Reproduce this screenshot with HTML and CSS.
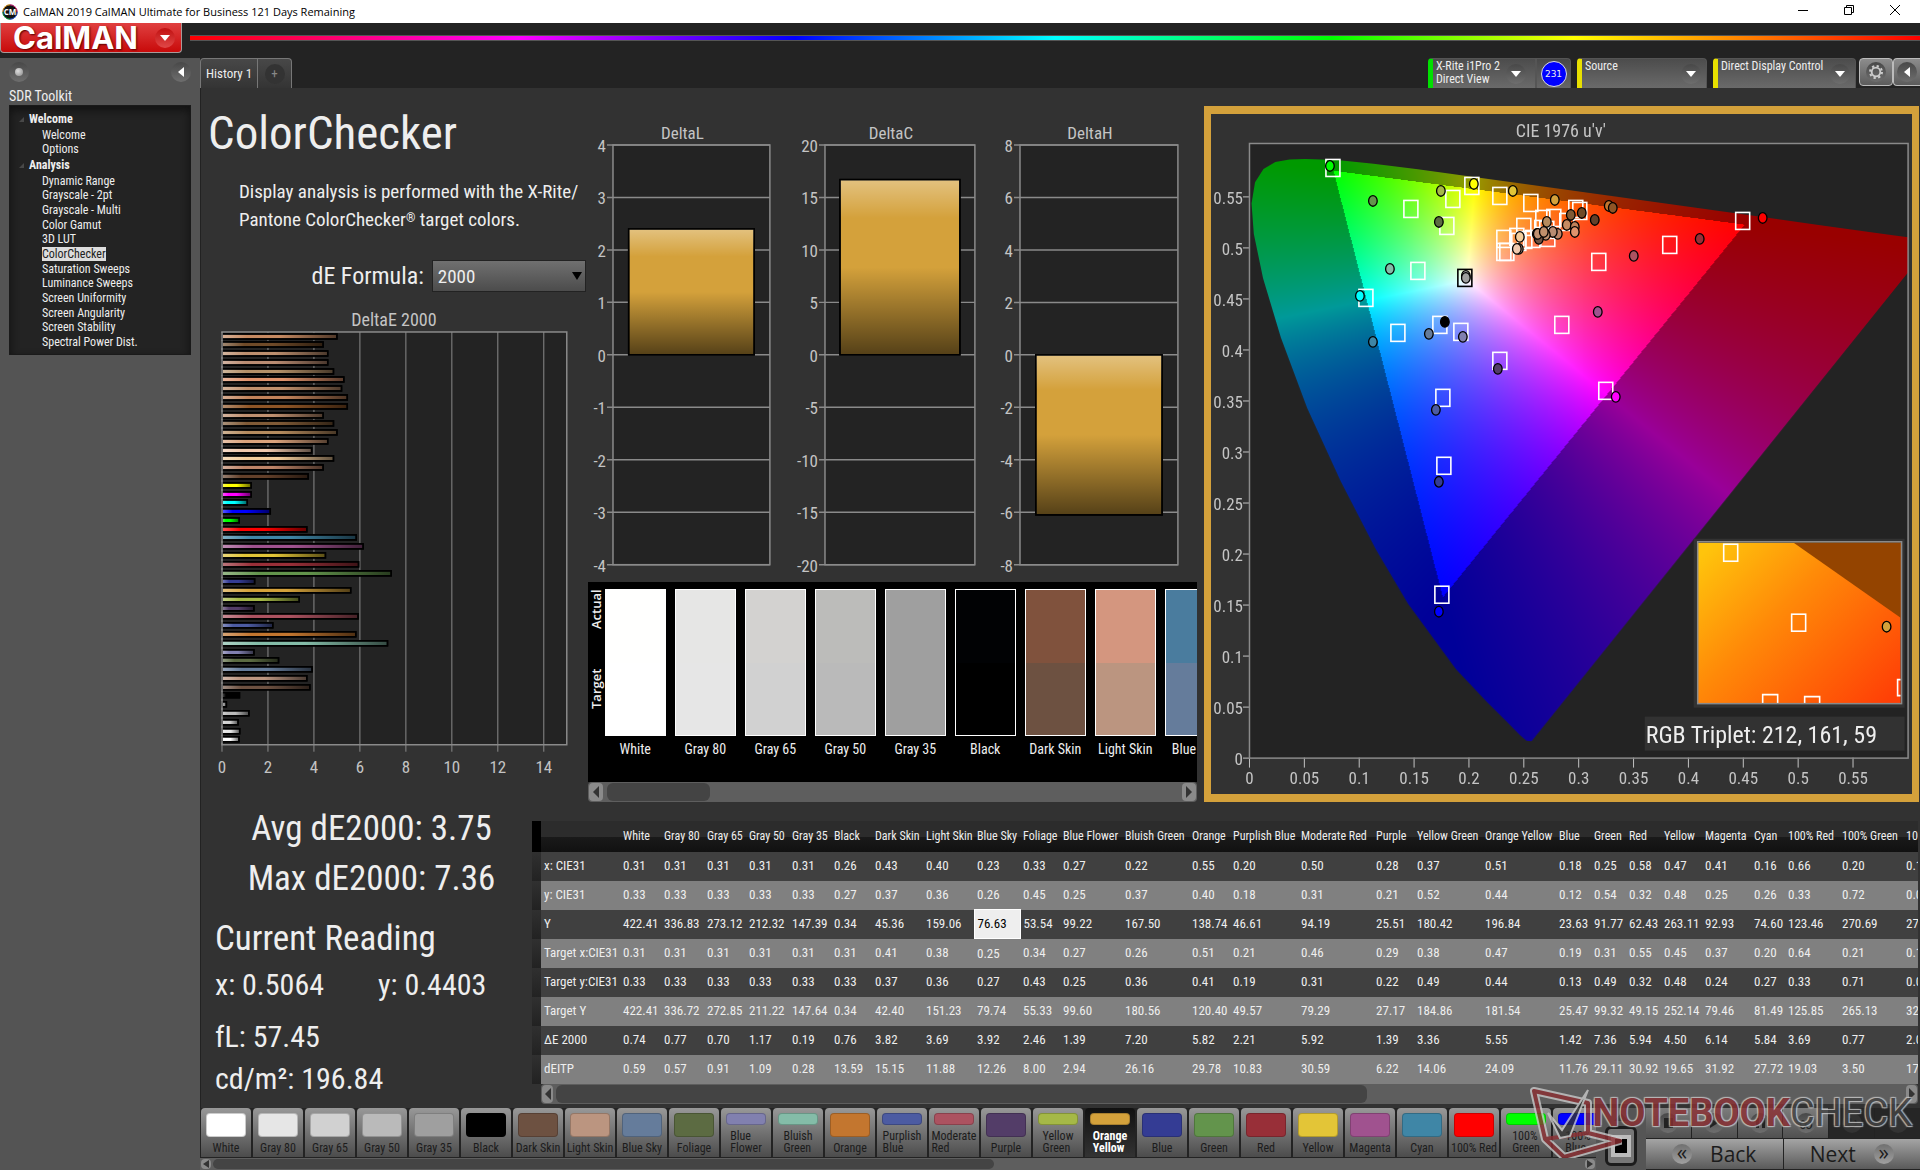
FILE: index.html
```html
<!DOCTYPE html>
<html lang="en">
<head>
    <meta charset="UTF-8">
    <meta name="viewport" content="width=device-width, initial-scale=1.0">
    <title>CalMAN 2019</title>
    <link rel="stylesheet" href="styles.css">
</head>
<body>
    <header class="titlebar">
        <svg class="app-icon" viewBox="0 0 16 16">
            <circle cx="8" cy="8" r="7.5" fill="#111"/>
            <path d="M8 .8A7.2 7.2 0 0 1 15.2 8" stroke="#e0308a" fill="none"/>
            <path d="M15.2 8A7.2 7.2 0 0 1 8 15.2" stroke="#2a5be0" fill="none"/>
            <path d="M8 15.2A7.2 7.2 0 0 1 .8 8" stroke="#18a84a" fill="none"/>
            <path d="M.8 8A7.2 7.2 0 0 1 8 .8" stroke="#e8a020" fill="none"/>
            <text x="8" y="11" text-anchor="middle" class="app-icon-text">CM</text>
        </svg>
        <span class="titlebar-text">CalMAN 2019 CalMAN Ultimate for Business 121 Days Remaining</span>
        <div class="window-controls">
            <button aria-label="Minimize"><svg viewBox="0 0 12 12"><path d="M1 6.5h10"/></svg></button>
            <button aria-label="Restore"><svg viewBox="0 0 12 12"><path d="M1.5 3.5h7v7h-7zM3.5 3.5v-2h7v7h-2"/></svg></button>
            <button aria-label="Close"><svg viewBox="0 0 12 12"><path d="M1 1l10 10M11 1L1 11"/></svg></button>
        </div>
    </header>

    <div class="brandbar">
        <button class="logo">CalMAN <span class="round round-red"><i class="caret"></i></span></button>
        <div class="rainbow"></div>
    </div>

    <div class="workspace">
        <aside class="sidebar">
            <div class="sidebar-tools">
                <button class="round" aria-label="Record"><i class="bead"></i></button>
                <button class="round" aria-label="Collapse"><i class="arrow-left"></i></button>
            </div>
            <h2 class="sidebar-title">SDR Toolkit</h2>
            <nav class="tree">
                <h3>Welcome</h3>
                <a href="#">Welcome</a>
                <a href="#">Options</a>
                <h3>Analysis</h3>
                <a href="#">Dynamic Range</a>
                <a href="#">Grayscale - 2pt</a>
                <a href="#">Grayscale - Multi</a>
                <a href="#">Color Gamut</a>
                <a href="#">3D LUT</a>
                <a href="#" class="active">ColorChecker</a>
                <a href="#">Saturation Sweeps</a>
                <a href="#">Luminance Sweeps</a>
                <a href="#">Screen Uniformity</a>
                <a href="#">Screen Angularity</a>
                <a href="#">Screen Stability</a>
                <a href="#">Spectral Power Dist.</a>
            </nav>
        </aside>

        <main class="content">
            <div class="tabs">
                <button class="tab">History 1</button>
                <button class="tab tab-add"><span class="round round-dim">+</span></button>
                <div class="devices">
                    <button class="device meter"><span>X-Rite i1Pro 2<br>Direct View</span><span class="round"><i class="caret"></i></span></button>
                    <div class="level"><span>231</span></div>
                    <button class="device source"><span>Source</span><span class="round"><i class="caret"></i></span></button>
                    <button class="device display"><span>Direct Display Control</span><span class="round"><i class="caret"></i></span></button>
                    <button class="square-btn" aria-label="Settings"><span class="round"><svg viewBox="0 0 16 16"><circle cx="8" cy="8" r="4.3" fill="none" stroke="#ccc" stroke-width="1.8"/><circle cx="8" cy="8" r="6" fill="none" stroke="#ccc" stroke-width="2" stroke-dasharray="2.3 2.4"/></svg></span></button>
                    <button class="square-btn last" aria-label="Collapse"><span class="round"><i class="arrow-left"></i></span></button>
                </div>
            </div>

            <div class="board">
                <section class="intro">
                    <h1>ColorChecker</h1>
                    <p>Display analysis is performed with the X-Rite/<br>Pantone ColorChecker<sup>®</sup> target colors.</p>
                    <div class="formula">
                        <label for="formula">dE Formula:</label>
                        <select id="formula"><option>2000</option></select>
                    </div>
                    <svg id="deltaE" class="chart" viewBox="0 0 387 486"></svg>
                </section>

                <section class="deltas">
                    <div class="delta-row">
                        <svg id="deltaL" class="chart" viewBox="0 0 197 468"></svg>
                        <svg id="deltaC" class="chart" viewBox="0 0 206 468"></svg>
                        <svg id="deltaH" class="chart" viewBox="0 0 207 468"></svg>
                    </div>
                    <div class="compare">
                        <div class="compare-side"><span>Target</span><span>Actual</span></div>
                        <div class="compare-list" id="compare"></div>
                    </div>
                    <div class="scrollbar"><button aria-label="Left"><i class="tri-left"></i></button><div class="thumb thumb-short"></div><button aria-label="Right"><i class="tri-right"></i></button></div>
                </section>

                <section class="cie">
                    <canvas id="gamut" width="659" height="615"></canvas>
                    <svg id="cie" class="chart" viewBox="0 0 701 680"></svg>
                </section>
            </div>

            <div class="results">
                <section class="stats">
                    <p class="big">Avg dE2000: 3.75</p>
                    <p class="big">Max dE2000: 7.36</p>
                    <h2>Current Reading</h2>
                    <p class="pair"><span>x: 0.5064</span><span>y: 0.4403</span></p>
                    <p class="lum">fL: 57.45</p>
                    <p>cd/m²: 196.84</p>
                </section>
                <div class="data">
                    <table id="readings"></table>
                    <div class="scrollbar data-scroll"><button aria-label="Left"><i class="tri-left"></i></button><div class="thumb thumb-data"></div><button aria-label="Right"><i class="tri-right"></i></button></div>
                </div>
            </div>

            <footer class="footer">
                <div class="patches-wrap">
                    <div class="patches" id="patches"></div>
                    <div class="scrollbar patch-scroll"><button aria-label="Left"><i class="tri-left"></i></button><div class="thumb thumb-patch"></div><button aria-label="Right"><i class="tri-right"></i></button></div>
                </div>
                <div class="window-tools">
                    <button aria-label="Up"><i class="tri-up"></i></button>
                    <button aria-label="Pattern"><i class="pattern"></i></button>
                </div>
                <div class="transport">
                    <div class="media">
                        <button aria-label="Stop"><span class="round"><i class="stop"></i></span></button>
                        <button aria-label="Play"><span class="round"><i class="play"></i></span></button>
                        <button aria-label="Step"><span class="round"><i class="step"></i></span></button>
                        <button aria-label="Loop"><span class="round">∞</span></button>
                        <button class="off" aria-label="Refresh"><span class="round">↻</span></button>
                        <button class="off" aria-label="More"><span class="round"></span></button>
                    </div>
                    <div class="steps">
                        <button><span class="round">«</span> Back</button>
                        <button>Next <span class="round">»</span></button>
                    </div>
                </div>
            </footer>
        </main>
    </div>

    <div class="watermark">
        <svg viewBox="0 0 92 72">
            <path d="M4 5L58 17L58 47L90 55L34 71L15 53Z" fill="none" stroke="#c9c9c9" stroke-width="8" stroke-linejoin="round"/>
            <path d="M4 5L58 17L58 47L90 55L34 71L15 53ZM15 53L58 47" fill="none" stroke="#8c2f33" stroke-width="4" stroke-linejoin="round"/>
            <path d="M18 27L32 44L58 4L40 50L30 52Z" fill="#333" stroke="#c9c9c9" stroke-width="2"/>
        </svg>
        <span class="wm-bold">NOTEBOOK</span><span class="wm-light">CHECK</span>
    </div>

    <script src="script.js"></script>
</body>
</html>
```
FILE: styles.css
```css
:root {
    --bg: #323232;
    --dark: #232323;
    --gold: #d4a13b;
    --text: #eeeeee;
    --condensed: 'Roboto Condensed', 'Open Sans', sans-serif;
}

* {
    box-sizing: border-box;
    margin: 0;
    padding: 0;
}

body {
    position: relative;
    display: flex;
    flex-direction: column;
    min-height: 100vh;
    overflow-x: hidden;
    background: var(--dark);
    color: var(--text);
    font-family: var(--condensed);
    font-size: 12px;
}

button {
    border: none;
    background: none;
    color: inherit;
    font: inherit;
}

/* title bar */
.titlebar {
    display: flex;
    align-items: center;
    height: 23px;
    padding-left: 2px;
    background: #fff;
    color: #000;
    font-family: 'Open Sans', sans-serif;
    font-size: 11px;
}

.app-icon {
    width: 16px;
    height: 16px;
    margin-right: 5px;
}

.app-icon-text {
    fill: #fff;
    font-size: 8px;
    font-weight: bold;
}

.window-controls {
    display: flex;
    margin-left: auto;
    margin-right: 2px;
}

.window-controls button {
    width: 46px;
    height: 22px;
}

.window-controls svg {
    width: 12px;
    height: 12px;
    fill: none;
    stroke: #000;
}

/* brand */
.brandbar {
    display: flex;
    height: 35px;
}

.logo {
    display: flex;
    align-items: center;
    justify-content: space-between;
    width: 182px;
    height: 30px;
    margin-right: 8px;
    padding: 0 6px 0 12px;
    border: 1px solid #a99;
    border-top: none;
    border-radius: 0 0 4px 4px;
    background: linear-gradient(#e04040, #c80a0a);
    color: #fff;
    font-family: Inter, sans-serif;
    font-size: 31px;
    font-weight: 700;
    line-height: 28px;
    text-shadow: 1px 1px 2px #500;
}

.rainbow {
    flex: 1;
    height: 6px;
    margin-top: 12px;
    border-top: 1px solid #555;
    border-bottom: 1px solid #555;
    background: linear-gradient(to right, #f00, #f0f 19%, #00f 35%, #0ff 50%, #0f0 66%, #ff0 80%, #f00);
}

.round {
    display: flex;
    align-items: center;
    justify-content: center;
    flex: none;
    width: 20px;
    height: 20px;
    border-radius: 50%;
    background: linear-gradient(#484848, #6e6e6e);
}

.round-red { background: linear-gradient(#c01010, #e04848); }
.round-dim { background: #333; color: #888; }

.caret {
    border: 5px solid transparent;
    border-top: 6px solid #fff;
    border-bottom: none;
}

.arrow-left {
    border: 5px solid transparent;
    border-right: 6px solid #fff;
    border-left: none;
}

.bead {
    width: 8px;
    height: 8px;
    border-radius: 50%;
    background: radial-gradient(circle at 3px 3px, #ddd, #888);
}

/* sidebar */
.workspace {
    display: flex;
    flex: 1;
}

.sidebar {
    flex: none;
    width: 200px;
    padding: 4px 9px;
    background: #545454;
}

.sidebar-tools {
    display: flex;
    justify-content: space-between;
}

.sidebar-title {
    padding-top: 5px;
    font-size: 14px;
    font-weight: normal;
    line-height: 18px;
}

.tree {
    display: flex;
    flex-direction: column;
    align-items: flex-start;
    justify-content: space-between;
    height: 250px;
    padding: 5px 0 5px 32px;
    border: 1px solid #1a1a1a;
    background: var(--dark);
    box-shadow: inset 0 4px 8px #111;
    font-size: 12px;
}

.tree h3 {
    position: relative;
    margin-left: -13px;
    font-size: 12px;
    line-height: 16px;
}

.tree h3::before {
    content: '';
    position: absolute;
    top: 6px;
    left: -10px;
    border-left: 5px solid transparent;
    border-bottom: 5px solid #484848;
}

.tree a {
    color: var(--text);
    line-height: 14px;
    text-decoration: none;
}

.tree .active {
    background: #ddd;
    color: #222;
}

/* tabs */
.content {
    flex: 1;
    min-width: 0;
    display: flex;
    flex-direction: column;
}

.tabs {
    display: flex;
    height: 30px;
}

.tab {
    width: 58px;
    border: 1px solid #777;
    border-bottom: none;
    border-radius: 4px 0 0 0;
    background: linear-gradient(#484848, #343434);
    font-size: 13px;
}

.tab-add {
    display: flex;
    align-items: center;
    justify-content: center;
    width: 34px;
    border-left: none;
    border-radius: 0 4px 0 0;
}

.devices {
    display: flex;
    margin-left: auto;
}

.device {
    display: flex;
    justify-content: space-between;
    align-items: flex-start;
    margin-right: 6px;
    padding: 1px 5px 0 3px;
    border: 1px solid #555;
    border-bottom: none;
    border-left: 5px solid #e8e000;
    border-radius: 4px 4px 0 0;
    background: linear-gradient(#4c4c4c, #6a6a6a);
    font-size: 12px;
    line-height: 13px;
    text-align: left;
}

.device .round { margin-top: 4px; }
.meter { width: 108px; margin-right: 0; padding-right: 9px; border-left-color: #00e000; border-radius: 4px 0 0 0; }
.source { width: 130px; }
.display { width: 143px; margin-right: 3px; }

.level {
    display: flex;
    align-items: center;
    justify-content: center;
    width: 35px;
    margin-right: 6px;
    border: 1px solid #555;
    border-bottom: none;
    border-radius: 0 4px 0 0;
    background: linear-gradient(#484848, #666);
}

.level span {
    width: 26px;
    height: 26px;
    border: 1px solid #ddd;
    border-radius: 50%;
    background: #00f;
    font-family: 'DejaVu Sans', sans-serif;
    font-size: 9px;
    line-height: 24px;
    text-align: center;
}

.square-btn {
    display: flex;
    align-items: center;
    justify-content: center;
    width: 34px;
    height: 28px;
    border: 1px solid #bbb;
    border-radius: 4px;
    background: linear-gradient(#8c8c8c, #5c5c5c);
}

.square-btn svg { width: 16px; height: 16px; }
.square-btn.last { width: 27px; border-right: none; border-radius: 4px 0 0 4px; }

/* board */
.board {
    display: grid;
    grid-template-columns: minmax(0, 387fr) minmax(0, 617fr) minmax(0, 716fr);
    align-items: start;
    padding-top: 18px;
    border-left: 1px solid #222;
    background: var(--bg);
}

.chart {
    display: block;
    width: 100%;
    height: auto;
    overflow: visible;
}

.chart text {
    fill: #c4c4c4;
    font-size: 17px;
}

.chart .chart-title { font-size: 18px; }

.intro h1 {
    padding-left: 7px;
    font-size: 47px;
    font-weight: normal;
    line-height: 54px;
}

.intro p {
    padding: 18px 0 0 38px;
    font-size: 19px;
    line-height: 28px;
    white-space: nowrap;
}

.intro sup {
    font-size: 12px;
    line-height: 0;
    vertical-align: 4px;
}

.formula {
    display: flex;
    align-items: center;
    justify-content: flex-end;
    gap: 8px;
    margin: 26px 1px 12px 0;
    font-size: 24px;
    line-height: 32px;
}

.formula select {
    width: 154px;
    height: 32px;
    padding-left: 5px;
    appearance: none;
    border: 1px solid #222;
    background: linear-gradient(#707070, #4c4c4c);
    color: var(--text);
    font-family: var(--condensed);
    font-size: 19px;
}

.formula::after {
    content: '';
    position: relative;
    margin-left: -22px;
    margin-right: 5px;
    border: 5px solid transparent;
    border-top: 8px solid #000;
    border-bottom: none;
}

.deltas { padding-right: 7px; }

.delta-row {
    display: grid;
    grid-template-columns: minmax(0, 197fr) minmax(0, 206fr) minmax(0, 207fr);
}

.compare {
    display: flex;
    height: 200px;
    margin-top: 8px;
    padding-top: 7px;
    overflow: hidden;
    background: #000;
}

.compare-side {
    display: flex;
    justify-content: flex-end;
    flex: none;
    gap: 40px;
    width: 17px;
    height: 136px;
    writing-mode: vertical-rl;
    transform: rotate(180deg);
    font-family: 'Open Sans', sans-serif;
    font-size: 13px;
    font-weight: 600;
    line-height: 17px;
}

.compare-list {
    display: flex;
    gap: 9px;
}

.compare-item {
    flex: none;
    width: 61px;
    font-size: 14px;
    line-height: 26px;
    text-align: center;
}

.compare-item i {
    display: block;
    height: 74px;
    border: 1px solid #fff;
    border-bottom: none;
}

.compare-item i + i {
    height: 73px;
    border-top: none;
    border-bottom: 1px solid #fff;
}

/* scroll bars */
.scrollbar {
    display: flex;
    align-items: center;
    height: 20px;
    padding: 1px;
    border-radius: 4px;
    background: #5e5e5e;
}

.scrollbar button {
    display: flex;
    align-items: center;
    justify-content: center;
    width: 14px;
    height: 100%;
    border-radius: 4px;
    background: #8a8a8a;
}

.scrollbar button:last-child { margin-left: auto; }

.thumb {
    height: 100%;
    margin-left: 4px;
    border-radius: 6px;
    background: #444;
}

.thumb-short { width: 17%; }
.thumb-data { width: 59%; margin-left: 3px; }
.thumb-patch { width: 56%; margin-left: 2px; }

.tri-left { border: 6px solid transparent; border-right: 6px solid #333; border-left: none; }
.tri-right { border: 6px solid transparent; border-left: 6px solid #333; border-right: none; }
.tri-up { border: 7px solid transparent; border-bottom: 8px solid #333; border-top: none; }

/* cie diagram */
.cie {
    display: grid;
    align-items: start;
    margin-right: 1px;
    border: 8px solid var(--gold);
    border-left-width: 7px;
    border-right-width: 7px;
    background: var(--bg);
}

.cie canvas,
.cie .chart {
    grid-area: 1 / 1;
}

/* plot area inside the 701 x 680 drawing */
.cie canvas {
    width: 94%;
    margin: 4.2% 0 0 5.5%;
    background: var(--dark);
}

.cie .triplet {
    fill: var(--text);
    font-size: 24px;
}

/* results */
.results {
    display: flex;
    flex: 1;
    border-left: 1px solid #222;
    background: var(--bg);
}

.stats {
    flex: none;
    width: 331px;
    padding: 2px 0 7px 14px;
    font-size: 30px;
    line-height: 42px;
}

.stats .big {
    padding-right: 4px;
    font-size: 35px;
    line-height: 50px;
    text-align: center;
}

.stats h2 {
    padding-top: 10px;
    font-size: 35px;
    font-weight: normal;
    line-height: 50px;
}

.pair { display: flex; gap: 54px; }
.lum { padding-top: 10px; }

.data {
    flex: 1;
    min-width: 0;
    margin: 19px 2px 4px 0;
    overflow: hidden;
}

#readings {
    width: 0;
    min-width: 100%;
    table-layout: fixed;
    border-collapse: collapse;
    font-size: 13px;
    line-height: 20px;
    white-space: nowrap;
}

#readings th,
#readings td {
    padding-left: 3px;
    text-align: left;
    font-weight: normal;
}

#readings thead tr {
    height: 31px;
    background: linear-gradient(#2c2c2c 50%, #1a1a1a 50%, #111);
}

#readings thead th { font-size: 12px; }
#readings tbody tr { height: 29px; background: #404040; }
#readings tbody tr:nth-child(even) { background: #808080; }
#readings .grip { background: linear-gradient(#303030, #222); }
#readings thead .grip { background: #000; }

#readings .selected {
    border: 1px solid #fff;
    background: #eee;
    color: #000;
}

.data-scroll { margin-left: 9px; }
.data-scroll button { width: 11px; }

/* footer */
.footer {
    display: flex;
    height: 62px;
    background: var(--dark);
}

.patches-wrap {
    flex: 1;
    min-width: 0;
    overflow: hidden;
}

.patches {
    display: flex;
    gap: 2px;
    height: 49px;
    padding-left: 1px;
}

.patch {
    display: flex;
    flex-direction: column;
    align-items: center;
    flex: none;
    width: 50px;
    padding: 5px 0 3px;
    border-radius: 4px 4px 0 0;
    background: linear-gradient(#989898, #4c4c4c);
    color: #1c1c1c;
    font-size: 12px;
    line-height: 12px;
    white-space: nowrap;
}

.patch i {
    width: 40px;
    height: 24px;
    border: 1px solid rgba(0, 0, 0, 0.2);
    border-radius: 4px;
}

.patch.two i { height: 12px; }
.patch span { margin-top: auto; text-align: left; }

.patch.active {
    background: linear-gradient(#111, #333);
    color: #fff;
    font-weight: bold;
}

.patch-scroll { height: 12px; margin-top: 1px; border-radius: 0; }
.patch-scroll button { width: 10px; }
.patch-scroll .tri-left,
.patch-scroll .tri-right { border-top-width: 4px; border-bottom-width: 4px; }

.window-tools {
    display: flex;
    flex-direction: column;
    width: 50px;
    background: #555;
}

.window-tools button {
    display: flex;
    align-items: center;
    justify-content: center;
    height: 18px;
}

.window-tools button:last-child {
    width: 32px;
    height: 40px;
    margin: 0 9px;
    border: 3px solid #1c1c1c;
    border-radius: 6px;
    background: #777;
}

.pattern {
    width: 20px;
    height: 22px;
    border: 4px solid #bbb;
    background: #000;
}

.transport {
    width: 274px;
    font-size: 22px;
}

.media { display: grid; grid-template-columns: repeat(6, 1fr); gap: 1px; height: 30px; }

.media button {
    display: flex;
    align-items: center;
    justify-content: center;
    background: linear-gradient(#7c7c7c, #505050);
    color: #222;
    font-size: 16px;
}

.media .off { background: #262626; }
.media .off .round { background: #333; }
.stop { width: 9px; height: 10px; background: #222; }
.play { border: 5px solid transparent; border-left: 8px solid #222; border-right: none; }
.step { width: 9px; height: 10px; border: 3px solid #222; border-top: none; border-bottom: none; }

.steps { display: grid; grid-template-columns: 1fr 1fr; gap: 1px; margin-top: 1px; height: 30px; }

.steps button {
    display: flex;
    align-items: center;
    justify-content: center;
    gap: 18px;
    background: linear-gradient(#a4a4a4, #5a5a5a);
    color: #1c1c1c;
    font-family: 'Open Sans', sans-serif;
    font-size: 21px;
}

.steps .round {
    padding-bottom: 4px;
    background: linear-gradient(#707070, #a0a0a0);
    line-height: 20px;
}

/* watermark over the lower right corner */
.watermark {
    position: absolute;
    right: 8px;
    bottom: 12px;
    display: flex;
    align-items: flex-start;
    opacity: 0.8;
    font-family: Roboto, sans-serif;
    font-size: 38px;
    line-height: 55px;
    pointer-events: none;
    text-shadow: 1px 1px 1px #ccc, -1px -1px 1px #ccc, 1px -1px 1px #ccc, -1px 1px 1px #ccc;
}

.watermark svg { width: 92px; height: 72px; margin-right: -30px; }
.wm-bold { color: #8c2f33; font-weight: bold; }
.wm-light { color: #444; }
```
FILE: script.js
```javascript
const NS = 'http://www.w3.org/2000/svg';

function add(parent, tag, attrs, text) {
    const el = document.createElementNS(NS, tag);
    for (const k in attrs) el.setAttribute(k, attrs[k]);
    if (text !== undefined) el.textContent = text;
    parent.appendChild(el);
    return el;
}

function gradient(svg, id, horizontal) {
    const g = add(add(svg, 'defs', {}), 'linearGradient', { id: id, x1: 0, y1: 0, x2: horizontal ? 1 : 0, y2: horizontal ? 0 : 1 });
    add(g, 'stop', { offset: 0, 'stop-color': '#fff', 'stop-opacity': 0.35 });
    add(g, 'stop', { offset: 0.22, 'stop-color': '#fff', 'stop-opacity': 0 });
    add(g, 'stop', { offset: 0.5, 'stop-color': '#000', 'stop-opacity': 0 });
    add(g, 'stop', { offset: 1, 'stop-color': '#000', 'stop-opacity': 0.6 });
}

// name, patch color, measured color
const colors = [
    ['White', '#ffffff', '#fffffe'], ['Gray 80', '#e6e6e6', '#e6e6e5'], ['Gray 65', '#d1d1d1', '#d3d2d0'],
    ['Gray 50', '#bababa', '#bcbcba'], ['Gray 35', '#9f9f9f', '#9f9f9f'], ['Black', '#000000', '#010204'],
    ['Dark Skin', '#6d5141', '#80523d'], ['Light Skin', '#bb9580', '#d4967f'], ['Blue Sky', '#657c9b', '#4a7c9e'],
    ['Foliage', '#5c6b42'], ['Blue Flower', '#8180af'], ['Bluish Green', '#84bca8'], ['Orange', '#c3762f'],
    ['Purplish Blue', '#4c5ba2'], ['Moderate Red', '#ac5260'], ['Purple', '#533d68'], ['Yellow Green', '#a5b847'],
    ['Orange Yellow', '#d4a13b'], ['Blue', '#343c94'], ['Green', '#63944c'], ['Red', '#982f38'],
    ['Yellow', '#e3c537'], ['Magenta', '#a0528f'], ['Cyan', '#3f86a6'], ['100% Red', '#ff0000'],
    ['100% Green', '#00ff00'], ['100% Blue', '#0000ff']
];

// DeltaE 2000 bars, top to bottom
const deltaE = [
    [5, '#c68a62'], [4.4, '#6f4a28'], [4.6, '#bd8f6e'], [4.6, '#b98c72'], [4.85, '#b39068'], [5.3, '#e0936c'],
    [5.2, '#c0906c'], [5.45, '#c1825a'], [5.45, '#8f5526'], [4.4, '#bf9070'], [4.85, '#805a36'], [5, '#b58b5e'],
    [4.6, '#dba37c'], [3.9, '#f0c9ae'], [4.85, '#f3cd9c'], [4.4, '#bd8468'], [3.75, '#63402a'], [1.27, '#ffff00'],
    [1.27, '#ff00ff'], [1.1, '#00ffff'], [2.1, '#0000ff'], [0.75, '#00ff00'], [3.69, '#ff0000'], [5.84, '#3f86a6'],
    [6.14, '#a0528f'], [4.5, '#e3c537'], [5.94, '#982f38'], [7.36, '#63944c'], [1.42, '#343c94'], [5.6, '#d4a13b'],
    [3.36, '#a5b847'], [1.39, '#533d68'], [5.92, '#ac5260'], [2.21, '#4c5ba2'], [5.82, '#c3762f'], [7.2, '#84bca8'],
    [1.39, '#8180af'], [2.46, '#5c6b42'], [3.92, '#657c9b'], [3.69, '#bb9580'], [3.82, '#6d5141'], [0.76, '#000000'],
    [0.19, '#9f9f9f'], [1.17, '#bababa'], [0.7, '#d1d1d1'], [0.77, '#e6e6e6'], [0.74, '#ffffff']
];

function drawDeltaE() {
    const svg = document.getElementById('deltaE');
    gradient(svg, 'sheenX', true);
    add(svg, 'text', { x: 193, y: 22, 'text-anchor': 'middle', class: 'chart-title' }, 'DeltaE 2000');
    add(svg, 'rect', { x: 21, y: 28, width: 345, height: 413, fill: '#232323' });
    for (let v = 0; v <= 14; v += 2) {
        const x = 21 + v * 23;
        add(svg, 'path', { d: `M${x} 28V448`, stroke: '#8a8a8a' });
        add(svg, 'text', { x: x, y: 469, 'text-anchor': 'middle' }, v);
    }
    deltaE.forEach(([v, c], i) => {
        const y = 29.5 + i * 8.78;
        [c, 'url(#sheenX)'].forEach(fill => add(svg, 'rect', { x: 21, y: Math.round(y), width: v * 23, height: 5, fill: fill, stroke: '#000', 'stroke-width': 1.5 }));
    });
    add(svg, 'rect', { x: 21, y: 28, width: 345, height: 413, fill: 'none', stroke: '#8a8a8a', 'stroke-width': 1.5 });
}

function drawDelta(id, title, left, right, max, value) {
    const svg = document.getElementById(id);
    gradient(svg, id + 'Sheen', false);
    add(svg, 'text', { x: (left + right) / 2 - 9, y: 33, 'text-anchor': 'middle' }, title);
    add(svg, 'rect', { x: left, y: 39, width: right - left, height: 420, fill: '#232323', stroke: '#8a8a8a', 'stroke-width': 1.5 });
    for (let i = 0; i <= 8; i++) {
        const y = 39 + i * 52.5;
        add(svg, 'path', { d: `M${left - 6} ${y}H${right}`, stroke: '#8a8a8a', 'stroke-width': 1.5 });
        add(svg, 'text', { x: left - 7, y: y + 7, 'text-anchor': 'end' }, max - i * max / 4);
    }
    const h = Math.abs(value) / max * 210;
    const pad = (right - left) * 0.1;
    ['#d4a13b', `url(#${id}Sheen)`].forEach(fill => add(svg, 'rect', {
        x: left + pad, y: value > 0 ? 249 - h : 249, width: right - left - pad * 2, height: h, fill: fill, stroke: '#000', 'stroke-width': 1.5
    }));
}

// spectral locus in u'v'
const locus = [
    [.2568, .0165], [.2522, .0169], [.2461, .0226], [.2347, .035], [.2161, .0549], [.1877, .0871], [.1441, .151],
    [.1147, .2044], [.0828, .2708], [.0521, .3427], [.0282, .4117], [.0119, .4698], [.0035, .5131], [.0014, .5432],
    [.0046, .5638], [.0123, .577], [.0231, .5837], [.036, .5861], [.0501, .5868], [.0792, .5856], [.1127, .5821],
    [.1531, .5766], [.2026, .5694], [.2623, .5604], [.3315, .5501], [.4035, .5393], [.4692, .5296], [.5203, .5219],
    [.583, .5125], [.6234, .5065]
];

function drawGamut() {
    const canvas = document.getElementById('gamut');
    const ctx = canvas.getContext('2d');
    const w = canvas.width, h = canvas.height;
    const img = ctx.createImageData(w, h);
    const sx = 1098, sy = 1021;
    for (let py = 0; py < h; py++) {
        for (let px = 0; px < w; px++) {
            const u = px / sx, v = Math.max((h - py) / sy, 0.001);
            const X = 9 * u / (4 * v), Z = (12 - 3 * u - 20 * v) / (4 * v);
            const rgb = [
                2.04159 * X - 0.56501 - 0.34473 * Z,
                -0.96924 * X + 1.87597 + 0.04156 * Z,
                0.01344 * X - 0.11836 + 1.01517 * Z
            ];
            const inside = Math.min(...rgb) >= 0;
            const max = Math.max(...rgb);
            const k = (py * w + px) * 4;
            for (let c = 0; c < 3; c++) {
                img.data[k + c] = Math.max(rgb[c], 0) / max * (inside ? 255 : 153);
            }
            img.data[k + 3] = 255;
        }
    }
    ctx.putImageData(img, 0, 0);
    ctx.globalCompositeOperation = 'destination-in';
    ctx.beginPath();
    locus.forEach(([u, v]) => ctx.lineTo(u * sx, h - v * sy));
    ctx.fill();
}

const targets = [
    [122, 54], [261, 72], [200, 95], [242, 85], [236, 112], [289, 82], [320, 89], [365, 95], [369, 97], [532, 107],
    [459, 131], [388, 148], [351, 211], [395, 277], [289, 247], [250, 218], [229, 211], [187, 219], [155, 184],
    [207, 157], [232, 284], [233, 352], [231, 481], [293, 125], [293, 138], [296, 138], [313, 113], [332, 105],
    [343, 104], [306, 123], [308, 128], [314, 126], [337, 124], [331, 115], [336, 116], [322, 125], [356, 108]
];

const measured = [
    [119, 52, '#00ff00'], [263, 70, '#ffff00'], [230, 77, '#a5b847'], [162, 87, '#63944c'], [228, 108, '#5c6b42'],
    [302, 77, '#e3c537'], [344, 86, '#d4a13b'], [398, 92, '#c3762f'], [402, 94, '#8f5526'], [360, 101, '#805a36'],
    [371, 99, '#6f4a28'], [384, 106, '#63402a'], [552, 104, '#ff0000'], [489, 125, '#982f38'], [423, 142, '#ac5260'],
    [387, 198, '#a0528f'], [405, 283, '#ff00ff'], [287, 255, '#533d68'], [252, 223, '#8180af'], [234, 208, '#000000'],
    [218, 220, '#657c9b'], [162, 228, '#3f86a6'], [149, 182, '#00ffff'], [179, 155, '#84bca8'], [225, 296, '#4c5ba2'],
    [228, 368, '#343c94'], [228, 498, '#0000ff'], [336, 108, '#b58b5e'], [356, 111, '#c68a62'], [364, 113, '#c1825a'],
    [364, 118, '#e0936c'], [347, 120, '#bd8468'], [342, 118, '#b98c72'], [335, 121, '#bd8f6e'], [328, 125, '#6d5141'],
    [326, 120, '#b39068'], [327, 120, '#bf9070'], [333, 118, '#c0906c'], [309, 123, '#f3cd9c'], [308, 135, '#bb9580'],
    [306, 135, '#f0c9ae'], [255, 162, '#bababa'], [255, 164, '#9f9f9f']
];

function drawCie() {
    const svg = document.getElementById('cie');
    const square = (x, y, stroke) => add(svg, 'rect', { x: x - 7, y: y - 8.5, width: 14, height: 17, fill: 'none', stroke: stroke || '#fff', 'stroke-width': 1.6 });
    const dot = (x, y, fill) => add(svg, 'ellipse', { cx: x, cy: y, rx: 4.3, ry: 5.3, fill: fill, stroke: '#000', 'stroke-width': 1.3 });

    add(svg, 'text', { x: 350, y: 23, 'text-anchor': 'middle', class: 'chart-title' }, "CIE 1976 u'v'");
    for (let i = 0; i < 12; i++) {
        const x = 38.5 + i * 54.9, y = 644.5 - i * 51.05;
        const label = String(i * 5 / 100);
        add(svg, 'path', { d: `M${x} 644V654M38.5 ${y}H32`, stroke: '#c4c4c4' });
        add(svg, 'text', { x: x, y: 670, 'text-anchor': 'middle' }, label);
        add(svg, 'text', { x: 32, y: y + 7, 'text-anchor': 'end' }, label);
    }
    add(svg, 'rect', { x: 38.5, y: 29.5, width: 659, height: 615, fill: 'none', stroke: '#8a8a8a', 'stroke-width': 1.5 });
    targets.forEach(([x, y]) => square(x, y));
    square(254, 164, '#000');
    measured.forEach(([x, y, c]) => dot(x, y, c));

    // magnified view around the current target
    const g = add(add(svg, 'defs', {}), 'linearGradient', { id: 'inset', x1: 0, y1: 0.1, x2: 1, y2: 0.9 });
    add(g, 'stop', { offset: 0, 'stop-color': '#ffc40c' });
    add(g, 'stop', { offset: 0.4, 'stop-color': '#ff8a08' });
    add(g, 'stop', { offset: 1, 'stop-color': '#ff4006' });
    add(svg, 'rect', { x: 483, y: 425, width: 211, height: 169, fill: '#323232' });
    add(svg, 'rect', { x: 487, y: 429, width: 203, height: 161, fill: 'url(#inset)' });
    add(svg, 'path', { d: 'M583 429H690V504Z', fill: '#944400' });
    square(520, 439);
    square(588, 509);
    add(svg, 'path', { d: 'M552 590V581H567V590M594 590V583H609V590M690 566H687V582H690', fill: 'none', stroke: '#fff', 'stroke-width': 1.6 });
    dot(676, 513, '#d4a13b');
    add(svg, 'rect', { x: 487, y: 428, width: 204, height: 162, fill: 'none', stroke: '#8a8a8a', 'stroke-width': 1.5 });

    add(svg, 'rect', { x: 434, y: 603, width: 260, height: 34, fill: '#323232' });
    add(svg, 'text', { x: 435, y: 629, class: 'triplet' }, 'RGB Triplet: 212, 161, 59');
}

const widths = [9, 79, 41, 43, 42, 43, 42, 41, 51, 51, 46, 40, 62, 67, 41, 68, 75, 41, 68, 74, 35, 35, 35, 41, 49, 34, 54, 64, 60];

const rows = [
    ['x: CIE31', '0.31 0.31 0.31 0.31 0.31 0.26 0.43 0.40 0.23 0.33 0.27 0.22 0.55 0.20 0.50 0.28 0.37 0.51 0.18 0.25 0.58 0.47 0.41 0.16 0.66 0.20 0.15'],
    ['y: CIE31', '0.33 0.33 0.33 0.33 0.33 0.27 0.37 0.36 0.26 0.45 0.25 0.37 0.40 0.18 0.31 0.21 0.52 0.44 0.12 0.54 0.32 0.48 0.25 0.26 0.33 0.72 0.05'],
    ['Y', '422.41 336.83 273.12 212.32 147.39 0.34 45.36 159.06 76.63 53.54 99.22 167.50 138.74 46.61 94.19 25.51 180.42 196.84 23.63 91.77 62.43 263.11 92.93 74.60 123.46 270.69 27.41'],
    ['Target x:CIE31', '0.31 0.31 0.31 0.31 0.31 0.31 0.41 0.38 0.25 0.34 0.27 0.26 0.51 0.21 0.46 0.29 0.38 0.47 0.19 0.31 0.55 0.45 0.37 0.20 0.64 0.21 0.15'],
    ['Target y:CIE31', '0.33 0.33 0.33 0.33 0.33 0.33 0.37 0.36 0.27 0.43 0.25 0.36 0.41 0.19 0.31 0.22 0.49 0.44 0.13 0.49 0.32 0.48 0.24 0.27 0.33 0.71 0.06'],
    ['Target Y', '422.41 336.72 272.85 211.22 147.64 0.34 42.40 151.23 79.74 55.33 99.60 180.56 120.40 49.57 79.29 27.17 184.86 181.54 25.47 99.32 49.15 252.14 79.46 81.49 125.85 265.13 32.11'],
    ['ΔE 2000', '0.74 0.77 0.70 1.17 0.19 0.76 3.82 3.69 3.92 2.46 1.39 7.20 5.82 2.21 5.92 1.39 3.36 5.55 1.42 7.36 5.94 4.50 6.14 5.84 3.69 0.77 2.09'],
    ['dEITP', '0.59 0.57 0.91 1.09 0.28 13.59 15.15 11.88 12.26 8.00 2.94 26.16 29.78 10.83 30.59 6.22 14.06 24.09 11.76 29.11 30.92 19.65 31.92 27.72 19.03 3.50 17.20']
];

function buildTable() {
    const cols = widths.map(w => `<col style="width: ${w}px">`).join('');
    const head = colors.map(c => `<th scope="col">${c[0]}</th>`).join('');
    const body = rows.map(([name, values]) => {
        const cells = values.split(' ').map((v, i) => `<td${name === 'Y' && i === 8 ? ' class="selected"' : ''}>${v}</td>`).join('');
        return `<tr><td class="grip"></td><th scope="row">${name}</th>${cells}</tr>`;
    }).join('');
    document.getElementById('readings').innerHTML =
        `<colgroup>${cols}</colgroup><thead><tr><td class="grip"></td><td></td>${head}</tr></thead><tbody>${body}</tbody>`;
}

function buildPatches() {
    document.getElementById('compare').innerHTML = colors.slice(0, 9).map(([name, target, actual]) => `
        <div class="compare-item"><i style="background: ${actual}"></i><i style="background: ${target}"></i>${name}</div>`).join('');

    const wrapped = ['Blue Flower', 'Bluish Green', 'Purplish Blue', 'Moderate Red', 'Yellow Green', 'Orange Yellow', '100% Green', '100% Blue'];
    document.getElementById('patches').innerHTML = colors.map(([name, color]) => {
        const two = wrapped.includes(name);
        const cls = 'patch' + (two ? ' two' : '') + (name === 'Orange Yellow' ? ' active' : '');
        return `<button class="${cls}"><i style="background: ${color}"></i><span>${two ? name.replace(' ', '<br>') : name}</span></button>`;
    }).join('');
}

drawDeltaE();
drawDelta('deltaL', 'DeltaL', 25, 182, 4, 2.4);
drawDelta('deltaC', 'DeltaC', 40, 190, 20, 16.7);
drawDelta('deltaH', 'DeltaH', 29, 187, 8, -6.1);
drawGamut();
drawCie();
buildTable();
buildPatches();
```
